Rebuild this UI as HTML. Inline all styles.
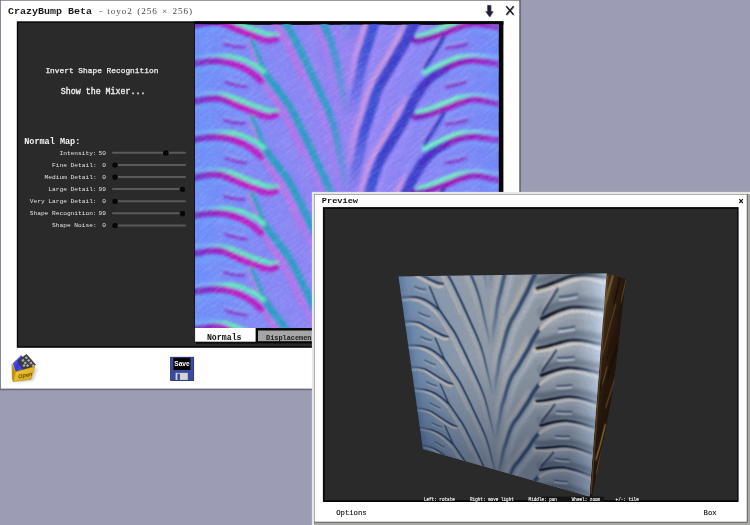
<!DOCTYPE html>
<html><head><meta charset="utf-8"><title>CrazyBump</title>
<style>
html,body{margin:0;padding:0;}
body{width:750px;height:525px;overflow:hidden;background:#9c9cb4;position:relative;font-family:"Liberation Mono",monospace;}
.L{position:absolute;left:0;top:0;will-change:transform;}
.clip{position:absolute;left:0;top:0;width:750px;height:496.6px;overflow:hidden;}
.cube{position:absolute;left:0;top:0;transform-origin:0 0;}
.cube svg{position:absolute;left:0;top:0;}
</style></head><body>
<svg class="L" width="750" height="525" viewBox="0 0 750 525" xml:space="preserve">
<rect x="0.00" y="0.00" width="521.00" height="390.30" fill="#6a6a80" />
<rect x="0.80" y="0.70" width="518.40" height="387.90" fill="#ffffff" />
<rect x="16.80" y="21.30" width="486.60" height="326.50" fill="#080808" />
<rect x="18.20" y="22.80" width="480.60" height="323.40" fill="#2a2a2a" />
<rect x="194.20" y="21.30" width="309.20" height="3.40" fill="#050505" />
<rect x="194.20" y="24.70" width="1.00" height="303.40" fill="#101010" />
<svg x="195" y="24.7" width="303.8" height="303.4" viewBox="0 0 304 303" preserveAspectRatio="none">
<defs>
<linearGradient id="nbg" x1="0" x2="1" y1="0" y2="0">
<stop offset="0" stop-color="#6a90fa"/><stop offset="0.2" stop-color="#8088f6"/>
<stop offset="0.5" stop-color="#9482f2"/><stop offset="0.8" stop-color="#8486f6"/><stop offset="1" stop-color="#7088f8"/>
</linearGradient>
<filter id="b1" x="-5%" y="-5%" width="110%" height="110%"><feGaussianBlur stdDeviation="1.6"/></filter>
<filter id="b2" x="-5%" y="-5%" width="110%" height="110%"><feGaussianBlur stdDeviation="2.2"/></filter>
<filter id="nz" x="0" y="0" width="100%" height="100%"><feTurbulence type="fractalNoise" baseFrequency="0.35" numOctaves="2" seed="3"/>
<feColorMatrix type="matrix" values="0 0 0 0 1  0 0 0 0 1  0 0 0 0 1  0.9 0 0 0 -0.32"/></filter>
<filter id="nz2" x="0" y="0" width="100%" height="100%"><feTurbulence type="fractalNoise" baseFrequency="0.06 0.4" numOctaves="2" seed="11"/>
<feColorMatrix type="matrix" values="0 0 0 0 0.85  0 0 0 0 0.9  0 0 0 0 1  1.6 0 0 0 -0.62"/></filter>
<filter id="nz3" x="0" y="0" width="100%" height="100%"><feTurbulence type="fractalNoise" baseFrequency="0.06 0.4" numOctaves="2" seed="23"/>
<feColorMatrix type="matrix" values="0 0 0 0 0.25  0 0 0 0 0.1  0 0 0 0 0.7  1.6 0 0 0 -0.62"/></filter>
<linearGradient id="gT" gradientUnits="userSpaceOnUse" x1="0" y1="47" x2="0" y2="250"><stop offset="0" stop-color="#289ec0" stop-opacity="1"/><stop offset="0.5" stop-color="#2a9cc4" stop-opacity="1"/><stop offset="0.72" stop-color="#3898cc" stop-opacity="0.8"/><stop offset="0.9" stop-color="#5090d8" stop-opacity="0.4"/><stop offset="1" stop-color="#6088e0" stop-opacity="0"/></linearGradient>
<linearGradient id="gTp" gradientUnits="userSpaceOnUse" x1="0" y1="47" x2="0" y2="250"><stop offset="0" stop-color="#e060e0" stop-opacity="0.0"/><stop offset="0.12" stop-color="#e060e0" stop-opacity="0.5"/><stop offset="0.6" stop-color="#d870e8" stop-opacity="0.45"/><stop offset="1" stop-color="#d070f0" stop-opacity="0"/></linearGradient>
<linearGradient id="gB" gradientUnits="userSpaceOnUse" x1="0" y1="60" x2="0" y2="245"><stop offset="0" stop-color="#3a34c6" stop-opacity="1"/><stop offset="0.25" stop-color="#3446cc" stop-opacity="1"/><stop offset="0.65" stop-color="#384cd2" stop-opacity="0.95"/><stop offset="0.88" stop-color="#4a5cdc" stop-opacity="0.55"/><stop offset="1" stop-color="#6070e8" stop-opacity="0"/></linearGradient>
<linearGradient id="gBp" gradientUnits="userSpaceOnUse" x1="0" y1="60" x2="0" y2="235"><stop offset="0" stop-color="#f0a0d8" stop-opacity="0.0"/><stop offset="0.15" stop-color="#f4a4d4" stop-opacity="0.85"/><stop offset="0.7" stop-color="#f0a0dc" stop-opacity="0.7"/><stop offset="1" stop-color="#e098e8" stop-opacity="0"/></linearGradient>
<linearGradient id="gBl" gradientUnits="userSpaceOnUse" x1="0" y1="60" x2="0" y2="235"><stop offset="0" stop-color="#a890ff" stop-opacity="0.0"/><stop offset="0.15" stop-color="#a890ff" stop-opacity="0.6"/><stop offset="0.7" stop-color="#a890ff" stop-opacity="0.5"/><stop offset="1" stop-color="#a890ff" stop-opacity="0"/></linearGradient>
<linearGradient id="gCL" gradientUnits="userSpaceOnUse" x1="0" y1="0" x2="85" y2="0"><stop offset="0" stop-color="#80b8ff" stop-opacity="0.35"/><stop offset="0.2" stop-color="#78d0f0" stop-opacity="0.7"/><stop offset="0.42" stop-color="#60f0b8" stop-opacity="1"/><stop offset="1" stop-color="#58ecbc" stop-opacity="1"/></linearGradient>
<linearGradient id="gML" gradientUnits="userSpaceOnUse" x1="0" y1="0" x2="85" y2="0"><stop offset="0" stop-color="#6c34c8" stop-opacity="1"/><stop offset="0.2" stop-color="#9020c0" stop-opacity="1"/><stop offset="0.5" stop-color="#c018c0" stop-opacity="1"/><stop offset="1" stop-color="#b020c8" stop-opacity="1"/></linearGradient>
<linearGradient id="gCR" gradientUnits="userSpaceOnUse" x1="304" y1="0" x2="215" y2="0"><stop offset="0" stop-color="#80b8ff" stop-opacity="0.5"/><stop offset="0.25" stop-color="#78dcec" stop-opacity="0.9"/><stop offset="0.5" stop-color="#70f8c0" stop-opacity="1"/><stop offset="1" stop-color="#68f4c8" stop-opacity="1"/></linearGradient>
<linearGradient id="gMR" gradientUnits="userSpaceOnUse" x1="304" y1="0" x2="215" y2="0"><stop offset="0" stop-color="#8840d0" stop-opacity="0.95"/><stop offset="0.2" stop-color="#9818c0" stop-opacity="1"/><stop offset="0.6" stop-color="#a010b8" stop-opacity="1"/><stop offset="1" stop-color="#7018b8" stop-opacity="1"/></linearGradient>
<linearGradient id="gMR2" gradientUnits="userSpaceOnUse" x1="304" y1="0" x2="215" y2="0"><stop offset="0" stop-color="#8840d0" stop-opacity="0.95"/><stop offset="0.2" stop-color="#9818c0" stop-opacity="1"/><stop offset="0.5" stop-color="#9014b8" stop-opacity="1"/><stop offset="0.7" stop-color="#5028c4" stop-opacity="1"/><stop offset="1" stop-color="#3a34c6" stop-opacity="1"/></linearGradient>
<g id="ps" fill="none" stroke-linecap="round" stroke-linejoin="round"><path d="M69.5 59.0C71.0 61.0 75.5 67.0 78.5 71.0C81.5 75.0 84.5 78.2 87.5 83.0C90.5 87.8 93.8 94.8 96.5 100.0C99.2 105.2 101.2 109.2 103.5 114.0C105.8 118.8 108.1 123.8 110.5 129.0C112.9 134.2 115.7 140.0 118.0 145.0C120.3 150.0 122.3 153.8 124.5 159.0C126.7 164.2 129.2 170.3 131.0 176.0C132.8 181.7 134.2 187.2 135.5 193.0C136.8 198.8 137.8 205.3 139.0 211.0C140.2 216.7 141.4 221.3 142.5 227.0C143.6 232.7 145.0 242.0 145.5 245.0" stroke="url(#gTp)" stroke-width="5" opacity="1.0" /><path d="M211.0 74.0C209.7 76.7 205.5 85.3 203.0 90.0C200.5 94.7 198.5 97.7 196.0 102.0C193.5 106.3 190.8 111.3 188.0 116.0C185.2 120.7 181.4 125.9 179.0 130.4C176.6 134.9 175.1 138.8 173.5 143.0C171.9 147.2 170.8 150.8 169.4 155.3C168.0 159.8 166.3 166.1 165.0 170.0C163.7 173.9 162.9 175.2 161.8 179.0C160.7 182.8 159.5 188.4 158.5 193.0C157.5 197.6 156.9 202.6 156.0 206.4C155.1 210.2 153.7 214.4 153.2 216.0" stroke="url(#gBp)" stroke-width="4.5" opacity="1.0" /><path d="M226.5 79.0C225.2 81.7 221.0 90.3 218.5 95.0C216.0 99.7 214.0 102.7 211.5 107.0C209.0 111.3 206.3 116.3 203.5 121.0C200.7 125.7 196.9 130.9 194.5 135.4C192.1 139.9 190.6 143.8 189.0 148.0C187.4 152.2 186.3 155.8 184.9 160.3C183.5 164.8 181.8 171.1 180.5 175.0C179.2 178.9 178.4 180.2 177.3 184.0C176.2 187.8 175.0 193.4 174.0 198.0C173.0 202.6 172.4 207.6 171.5 211.4C170.6 215.2 169.2 219.4 168.7 221.0" stroke="url(#gBl)" stroke-width="4" opacity="1.0" /><path d="M-4.0 7.0C-3.2 6.9 -2.0 7.0 1.0 6.5C4.0 6.0 9.8 4.4 14.0 4.0C18.2 3.6 21.3 3.0 26.4 4.3C31.5 5.6 39.1 9.6 44.7 11.9C50.3 14.2 57.5 17.0 60.0 18.0" stroke="#6ca8ff" stroke-width="4" opacity="0.7" /><path d="M-4.0 45.0C-3.2 44.9 -2.0 44.9 1.0 44.5C4.0 44.1 9.2 42.8 14.0 42.5C18.8 42.2 24.4 42.1 29.5 42.9C34.6 43.7 40.1 45.6 44.7 47.5C49.3 49.4 55.0 53.2 57.0 54.4" stroke="#6ca8ff" stroke-width="4" opacity="0.7" /><path d="M308.0 46.0C306.8 45.9 305.5 45.8 301.0 45.2C296.5 44.6 287.0 42.5 281.2 42.2C275.4 42.0 271.1 42.4 266.0 43.7C260.9 45.0 255.3 47.5 250.7 49.8C246.1 52.1 240.5 56.1 238.5 57.4" stroke="#78a8ff" stroke-width="4" opacity="0.55" /><path d="M308.0 9.7C306.8 9.6 305.5 9.7 301.0 8.9C296.5 8.1 286.8 5.1 281.0 5.0C275.2 4.9 271.1 6.6 266.0 8.1C260.9 9.6 255.8 12.3 250.7 14.2C245.6 16.1 238.0 18.6 235.5 19.5" stroke="#78a8ff" stroke-width="4" opacity="0.55" /></g>
<g id="pn" fill="none" stroke-linecap="round" stroke-linejoin="round"><path d="M69.0 47.0C70.2 48.5 73.3 52.5 76.0 56.0C78.7 59.5 82.0 64.0 85.0 68.0C88.0 72.0 91.0 75.2 94.0 80.0C97.0 84.8 100.3 91.8 103.0 97.0C105.7 102.2 107.7 106.2 110.0 111.0C112.3 115.8 114.6 120.8 117.0 126.0C119.4 131.2 122.2 137.0 124.5 142.0C126.8 147.0 128.8 150.8 131.0 156.0C133.2 161.2 135.7 167.3 137.5 173.0C139.3 178.7 140.7 184.2 142.0 190.0C143.3 195.8 144.3 202.3 145.5 208.0C146.7 213.7 147.9 218.3 149.0 224.0C150.1 229.7 151.5 239.0 152.0 242.0" stroke="url(#gT)" stroke-width="6.8" opacity="1.0" /><path d="M66.0 55.5C67.2 57.2 70.3 61.9 73.0 66.0C75.7 70.1 79.2 75.3 82.0 80.0C84.8 84.7 87.3 89.0 90.0 94.0C92.7 99.0 95.3 104.3 98.0 110.0C100.7 115.7 104.7 125.0 106.0 128.0" stroke="#e060d8" stroke-width="2.6" opacity="0.55" /><path d="M57.0 16.0C57.8 18.0 60.5 24.3 62.0 28.0C63.5 31.7 64.7 34.7 66.0 38.0C67.3 41.3 69.3 46.3 70.0 48.0" stroke="#2ca0c0" stroke-width="4.6" opacity="0.95" /><path d="M53.0 17.5C53.8 19.5 56.5 25.8 58.0 29.5C59.5 33.2 60.7 36.2 62.0 39.5C63.3 42.8 65.3 47.8 66.0 49.5" stroke="#e070d8" stroke-width="2.2" opacity="0.6" /><path d="M-4.0 -5.8C-3.2 -5.9 -2.0 -6.1 1.0 -6.3C4.0 -6.5 9.2 -7.1 14.0 -7.1C18.8 -7.1 24.4 -7.3 29.5 -6.3C34.6 -5.3 39.6 -2.9 44.7 -1.0C49.8 0.9 55.0 3.3 60.0 5.1C65.0 6.9 71.3 8.8 75.0 9.7C78.7 10.5 80.8 10.1 82.0 10.2" stroke="url(#gCL)" stroke-width="4.6" opacity="1.0" /><path d="M-4.0 0.8C-3.2 0.7 -2.0 0.8 1.0 0.3C4.0 -0.2 9.8 -1.8 14.0 -2.2C18.2 -2.6 21.3 -3.2 26.4 -1.9C31.5 -0.6 39.1 3.4 44.7 5.7C50.3 8.0 55.5 10.2 60.0 11.8C64.5 13.5 68.5 15.2 72.0 15.6C75.5 16.0 79.5 14.4 81.0 14.1" stroke="url(#gML)" stroke-width="6.6" opacity="1.0" /><path d="M-4.0 33.2C-3.2 33.1 -2.0 33.0 1.0 32.7C4.0 32.4 9.2 31.9 14.0 31.6C18.8 31.3 24.4 30.7 29.5 31.1C34.6 31.4 39.6 32.1 44.7 33.7C49.8 35.3 56.0 38.5 60.0 40.7C64.0 42.9 67.5 45.7 69.0 46.7" stroke="url(#gCL)" stroke-width="4.6" opacity="1.0" /><path d="M-4.0 38.8C-3.2 38.7 -2.0 38.7 1.0 38.3C4.0 37.9 9.2 36.6 14.0 36.3C18.8 36.0 24.4 35.9 29.5 36.7C34.6 37.5 40.1 39.4 44.7 41.3C49.3 43.2 53.5 45.8 57.0 48.2C60.5 50.6 64.5 54.5 66.0 55.8" stroke="url(#gML)" stroke-width="6.6" opacity="1.0" /><path d="M29.5 19.0C31.2 19.4 36.8 21.0 40.0 21.5C43.2 22.0 47.5 21.9 49.0 22.0" stroke="#8424c8" stroke-width="3.2" opacity="1" /><path d="M31.0 57.0C32.7 57.5 37.7 59.2 41.0 60.0C44.3 60.8 49.2 61.3 50.8 61.6" stroke="#8424c8" stroke-width="3.2" opacity="1" /><path d="M29.5 16.2C31.2 16.6 36.8 18.2 40.0 18.7C43.2 19.2 47.5 19.1 49.0 19.2" stroke="#90c0ff" stroke-width="1.8" opacity="0.7" /><path d="M31.0 54.2C32.7 54.7 37.7 56.4 41.0 57.2C44.3 58.0 49.2 58.5 50.8 58.8" stroke="#90c0ff" stroke-width="1.8" opacity="0.7" /><path d="M227.9 61.6C226.4 64.0 221.8 70.9 219.0 76.0C216.2 81.1 213.5 87.3 211.0 92.0C208.5 96.7 206.5 99.7 204.0 104.0C201.5 108.3 198.8 113.3 196.0 118.0C193.2 122.7 189.4 127.9 187.0 132.4C184.6 136.9 183.1 140.8 181.5 145.0C179.9 149.2 178.8 152.8 177.4 157.3C176.0 161.8 174.3 168.1 173.0 172.0C171.7 175.9 170.9 177.2 169.8 181.0C168.7 184.8 167.5 190.4 166.5 195.0C165.5 199.6 164.9 204.6 164.0 208.4C163.1 212.2 162.0 214.1 161.2 218.0C160.4 221.9 159.7 227.7 159.0 232.0C158.3 236.3 157.3 242.0 157.0 244.0" stroke="url(#gB)" stroke-width="9.5" opacity="1.0" /><path d="M250.7 43.3C248.7 44.6 242.3 47.8 238.5 50.9C234.7 54.0 231.2 57.4 227.9 61.6C224.7 65.8 221.8 70.9 219.0 76.0C216.2 81.1 213.5 87.3 211.0 92.0C208.5 96.7 206.5 99.7 204.0 104.0C201.5 108.3 198.8 113.3 196.0 118.0C193.2 122.7 188.5 130.0 187.0 132.4" stroke="#3a3cc8" stroke-width="9.5" opacity="0.9" /><path d="M308.0 32.5C306.8 32.4 305.5 32.2 301.0 32.0C296.5 31.8 286.8 31.0 281.0 31.0C275.2 31.0 271.1 30.9 266.0 31.9C260.9 32.9 255.8 35.1 250.7 37.2C245.6 39.4 239.1 43.0 235.5 44.8C231.9 46.6 230.1 47.5 229.0 48.0" stroke="url(#gCR)" stroke-width="4.6" opacity="1.0" /><path d="M308.0 39.5C306.8 39.4 305.5 39.3 301.0 38.7C296.5 38.1 287.0 36.0 281.2 35.7C275.4 35.5 271.1 35.9 266.0 37.2C260.9 38.5 255.3 41.0 250.7 43.3C246.1 45.6 242.3 47.8 238.5 50.9C234.7 54.0 229.7 59.8 227.9 61.6" stroke="url(#gMR2)" stroke-width="6.2" opacity="1.0" /><path d="M308.0 -2.8C306.8 -2.9 305.5 -3.1 301.0 -3.5C296.5 -3.9 286.8 -5.3 281.0 -5.3C275.2 -5.3 271.1 -4.9 266.0 -3.7C260.9 -2.5 255.8 -0.3 250.7 1.6C245.6 3.5 240.1 6.0 235.5 7.7C230.9 9.3 225.1 10.9 223.0 11.5" stroke="url(#gCR)" stroke-width="4.6" opacity="1.0" /><path d="M308.0 3.2C306.8 3.1 305.5 3.2 301.0 2.4C296.5 1.6 286.8 -1.4 281.0 -1.5C275.2 -1.6 271.1 0.1 266.0 1.6C260.9 3.1 255.8 5.8 250.7 7.7C245.6 9.6 240.3 11.6 235.5 13.0C230.7 14.4 224.8 15.6 222.0 16.0C219.2 16.4 219.5 15.6 219.0 15.5" stroke="url(#gMR)" stroke-width="6.0" opacity="1.0" /><path d="M249.0 11.5C248.0 13.2 245.2 18.4 243.0 22.0C240.8 25.6 238.2 29.4 236.0 33.0C233.8 36.5 231.0 41.6 230.0 43.3" stroke="#2234b8" stroke-width="3.6" opacity="1" /><path d="M245.5 10.5C244.5 12.2 241.7 17.4 239.5 21.0C237.3 24.6 234.7 28.4 232.5 32.0C230.3 35.5 227.5 40.6 226.5 42.3" stroke="#f0a0d0" stroke-width="1.6" opacity="0.3" /><path d="M252.0 23.0C253.7 22.8 258.7 22.2 262.0 21.5C265.3 20.8 270.3 19.4 272.0 19.0" stroke="#8020c0" stroke-width="3.2" opacity="1" /><path d="M252.0 61.6C253.7 61.2 258.9 60.3 262.0 59.5C265.1 58.7 269.1 57.4 270.5 57.0" stroke="#8020c0" stroke-width="3.2" opacity="1" /><path d="M252.0 20.2C253.7 19.9 258.7 19.4 262.0 18.7C265.3 18.0 270.3 16.6 272.0 16.2" stroke="#a0c8ff" stroke-width="1.8" opacity="0.6" /><path d="M252.0 58.8C253.7 58.5 258.9 57.5 262.0 56.7C265.1 55.9 269.1 54.6 270.5 54.2" stroke="#a0c8ff" stroke-width="1.8" opacity="0.6" /></g>
</defs>
<rect width="304" height="303" fill="url(#nbg)"/>
<g filter="url(#b2)"><use href="#ps" transform="translate(0 -304)"/><use href="#ps" transform="translate(0 -228)"/><use href="#ps" transform="translate(0 -152)"/><use href="#ps" transform="translate(0 -76)"/><use href="#ps" transform="translate(0 0)"/><use href="#ps" transform="translate(0 76)"/><use href="#ps" transform="translate(0 152)"/><use href="#ps" transform="translate(0 228)"/><use href="#ps" transform="translate(0 304)"/></g>
<g filter="url(#b1)"><use href="#pn" transform="translate(0 -304)"/><use href="#pn" transform="translate(0 -228)"/><use href="#pn" transform="translate(0 -152)"/><use href="#pn" transform="translate(0 -76)"/><use href="#pn" transform="translate(0 0)"/><use href="#pn" transform="translate(0 76)"/><use href="#pn" transform="translate(0 152)"/><use href="#pn" transform="translate(0 228)"/><use href="#pn" transform="translate(0 304)"/></g>
<rect width="304" height="303" filter="url(#nz)" opacity="0.15"/>
<g transform="rotate(-38 152 152)"><rect x="-80" y="-80" width="464" height="464" filter="url(#nz2)" opacity="0.15"/><rect x="-80" y="-78" width="464" height="464" filter="url(#nz3)" opacity="0.13"/></g>
</svg>
<rect x="255.60" y="328.10" width="243.20" height="15.30" fill="#050505" />
<rect x="196.00" y="340.50" width="60.60" height="3.10" fill="#050505" opacity="0.9"/>
<rect x="195.10" y="328.00" width="60.50" height="13.70" fill="#ffffff" />
<rect x="258.00" y="330.50" width="82.00" height="10.70" fill="#a6a6a6" />
<svg x="484" y="4" width="12" height="15" viewBox="0 0 12 15"><path d="M4.4 1.8h3.4v6h2.2L6.8 13.4 2.6 7.8h1.8z" fill="#9a9aa8" opacity="0.6"/><path d="M3.5 1.3h3.4v6.2h2.2L5.7 13 1.6 7.5h1.9z" fill="#1c1e2e" stroke="#34364a" stroke-width="0.4"/></svg>
<path d="M507.1 7L514.4 15.6M514.4 7L507.1 15.6" stroke="#b0b0b8" stroke-width="1.1" fill="none"/>
<path d="M506.3 6.2L513.6 14.8M513.6 6.2L506.3 14.8" stroke="#16161e" stroke-width="1.35" fill="none"/>
<rect x="112.00" y="151.80" width="74.00" height="2.00" fill="#5a5a5a" rx="1"/><circle cx="165.80" cy="152.45" r="2.9" fill="#3c3c3c"/><circle cx="165.80" cy="152.90" r="2.8" fill="#070707"/><text x="96.60" y="154.70" font-family="Liberation Mono" font-size="6.2" font-weight="normal" fill="#e2e2e2" text-anchor="end" >Intensity:</text><text x="105.90" y="154.70" font-family="Liberation Mono" font-size="6.2" font-weight="normal" fill="#e2e2e2" text-anchor="end" >50</text>
<rect x="112.00" y="163.90" width="74.00" height="2.00" fill="#5a5a5a" rx="1"/><circle cx="115.00" cy="164.55" r="2.9" fill="#3c3c3c"/><circle cx="115.00" cy="165.00" r="2.8" fill="#070707"/><text x="96.60" y="166.80" font-family="Liberation Mono" font-size="6.2" font-weight="normal" fill="#e2e2e2" text-anchor="end" >Fine Detail:</text><text x="105.90" y="166.80" font-family="Liberation Mono" font-size="6.2" font-weight="normal" fill="#e2e2e2" text-anchor="end" >0</text>
<rect x="112.00" y="176.00" width="74.00" height="2.00" fill="#5a5a5a" rx="1"/><circle cx="115.00" cy="176.65" r="2.9" fill="#3c3c3c"/><circle cx="115.00" cy="177.10" r="2.8" fill="#070707"/><text x="96.60" y="178.90" font-family="Liberation Mono" font-size="6.2" font-weight="normal" fill="#e2e2e2" text-anchor="end" >Medium Detail:</text><text x="105.90" y="178.90" font-family="Liberation Mono" font-size="6.2" font-weight="normal" fill="#e2e2e2" text-anchor="end" >0</text>
<rect x="112.00" y="188.10" width="74.00" height="2.00" fill="#5a5a5a" rx="1"/><circle cx="182.60" cy="188.75" r="2.9" fill="#3c3c3c"/><circle cx="182.60" cy="189.20" r="2.8" fill="#070707"/><text x="96.60" y="191.00" font-family="Liberation Mono" font-size="6.2" font-weight="normal" fill="#e2e2e2" text-anchor="end" >Large Detail:</text><text x="105.90" y="191.00" font-family="Liberation Mono" font-size="6.2" font-weight="normal" fill="#e2e2e2" text-anchor="end" >99</text>
<rect x="112.00" y="200.20" width="74.00" height="2.00" fill="#5a5a5a" rx="1"/><circle cx="115.00" cy="200.85" r="2.9" fill="#3c3c3c"/><circle cx="115.00" cy="201.30" r="2.8" fill="#070707"/><text x="96.60" y="203.10" font-family="Liberation Mono" font-size="6.2" font-weight="normal" fill="#e2e2e2" text-anchor="end" >Very Large Detail:</text><text x="105.90" y="203.10" font-family="Liberation Mono" font-size="6.2" font-weight="normal" fill="#e2e2e2" text-anchor="end" >0</text>
<rect x="112.00" y="212.30" width="74.00" height="2.00" fill="#5a5a5a" rx="1"/><circle cx="182.60" cy="212.95" r="2.9" fill="#3c3c3c"/><circle cx="182.60" cy="213.40" r="2.8" fill="#070707"/><text x="96.60" y="215.20" font-family="Liberation Mono" font-size="6.2" font-weight="normal" fill="#e2e2e2" text-anchor="end" >Shape Recognition:</text><text x="105.90" y="215.20" font-family="Liberation Mono" font-size="6.2" font-weight="normal" fill="#e2e2e2" text-anchor="end" >99</text>
<rect x="112.00" y="224.40" width="74.00" height="2.00" fill="#5a5a5a" rx="1"/><circle cx="115.00" cy="225.05" r="2.9" fill="#3c3c3c"/><circle cx="115.00" cy="225.50" r="2.8" fill="#070707"/><text x="96.60" y="227.30" font-family="Liberation Mono" font-size="6.2" font-weight="normal" fill="#e2e2e2" text-anchor="end" >Shape Noise:</text><text x="105.90" y="227.30" font-family="Liberation Mono" font-size="6.2" font-weight="normal" fill="#e2e2e2" text-anchor="end" >0</text>
<text x="8.00" y="13.80" font-family="Liberation Mono" font-size="10" font-weight="bold" fill="#1a1a1a" text-anchor="start" transform="translate(0 13.80) scale(1 0.970) translate(0 -13.80)" >CrazyBump Beta</text>
<text x="99.00" y="13.50" font-family="Liberation Serif" font-size="9.2" font-weight="normal" fill="#4a4a4a" text-anchor="start" letter-spacing="0.9" word-spacing="1.2">- toyo2 (256 &#215; 256)</text>
<text x="45.40" y="73.30" font-family="Liberation Mono" font-size="7.85" font-weight="normal" fill="#f0f0f0" text-anchor="start" stroke="#f0f0f0" stroke-width="0.25">Invert Shape Recognition</text>
<text x="60.80" y="93.90" font-family="Liberation Mono" font-size="8.3" font-weight="normal" fill="#f4f4f4" text-anchor="start" stroke="#f4f4f4" stroke-width="0.3">Show the Mixer...</text>
<text x="24.20" y="143.90" font-family="Liberation Mono" font-size="8.5" font-weight="bold" fill="#f4f4f4" text-anchor="start" >Normal Map:</text>
<text x="206.90" y="339.60" font-family="Liberation Mono" font-size="8.25" font-weight="bold" fill="#111" text-anchor="start" >Normals</text>
<text x="266.00" y="339.60" font-family="Liberation Mono" font-size="6.9" font-weight="bold" fill="#1c1c1c" text-anchor="start" >Displacement</text>
<svg x="6" y="350" width="40" height="38" viewBox="0 0 40 38">
<defs><linearGradient id="fg" x1="0" x2="1" y1="0" y2="1"><stop offset="0" stop-color="#f6d040"/><stop offset="1" stop-color="#d4a010"/></linearGradient>
<linearGradient id="fb" x1="0" x2="1" y1="0" y2="1"><stop offset="0" stop-color="#7878ff"/><stop offset="0.5" stop-color="#3434d8"/><stop offset="1" stop-color="#6060f0"/></linearGradient>
<filter id="fs"><feGaussianBlur stdDeviation="0.9"/></filter></defs>
<path d="M9 31.5L26 29.5 30.5 17 28 17z" fill="#999" opacity="0.45" filter="url(#fs)" transform="translate(1.2 1.2)"/>
<path d="M6.9 13.4L15.2 5.4 18.6 9.2 17.6 19.5 10 22z" fill="url(#fb)" stroke="#2a2a98" stroke-width="0.4"/>
<path d="M11.9 10.8L20.6 4.3 29.7 14.8 22 21 17 20z" fill="#3c3c3c" stroke="#222" stroke-width="0.4"/>
<path d="M15.3 10.2l1.9-1.4 1.5 1.7-1.9 1.4zM18.6 7.6l1.9-1.4 1.5 1.7-1.9 1.4zM17.6 12.8l1.9-1.4 1.5 1.7-1.9 1.4zM20.9 10.3l1.9-1.4 1.5 1.7-1.9 1.4zM19.9 15.4l1.9-1.4 1.5 1.7-1.9 1.4zM23.2 12.9l1.9-1.4 1.5 1.7-1.9 1.4zM25.5 15.5l1.9-1.4 1.5 1.7-1.9 1.4zM16.3 15.4l1.9-1.4 1.5 1.7-1.9 1.4z" fill="#c8c8c8" opacity="0.8"/>
<path d="M5.8 13.7L9.8 21.7 7.2 31.8 6.1 28.9z" fill="#c49010" stroke="#a87c08" stroke-width="0.3"/>
<path d="M9.8 21.7L28.9 16.5 25 29.3 7.2 31.8z" fill="url(#fg)" stroke="#b08408" stroke-width="0.5"/>
<text x="12.6" y="28.4" font-family="Liberation Sans" font-style="italic" font-weight="bold" font-size="5.6" fill="#6e4c00" transform="rotate(-11 12.6 28.4)">Open</text>
</svg>
<svg x="170" y="356.5" width="26" height="26" viewBox="0 0 26 26">
<rect x="1.2" y="1.2" width="23" height="23.4" fill="#777" opacity="0.5"/><rect x="0.6" y="0.6" width="23" height="23.4" fill="#3c4a9c" stroke="#28306c" stroke-width="0.8"/>
<rect x="3.4" y="1.3" width="17" height="12.2" fill="#050505"/>
<rect x="5.6" y="16.4" width="12.2" height="7" fill="#d4d4d4"/>
<rect x="7.4" y="17.2" width="2.6" height="6.2" fill="#3c4a9c"/>
<text x="12" y="9.4" text-anchor="middle" font-family="Liberation Sans" font-weight="bold" font-size="6.6" fill="#fff">Save</text>
</svg>
<rect x="311.90" y="191.90" width="438.10" height="333.10" fill="#e6e6e2" />
<rect x="747.40" y="194.00" width="2.60" height="331.00" fill="#a8a8a4" />
<rect x="314.00" y="522.40" width="436.00" height="2.60" fill="#a8a8a4" />
<rect x="314.00" y="194.00" width="433.60" height="328.60" fill="#404040" />
<rect x="314.00" y="194.00" width="432.70" height="327.70" fill="#8c8c8c" />
<rect x="314.70" y="194.70" width="432.00" height="327.00" fill="#ffffff" />
<rect x="322.90" y="207.10" width="415.70" height="294.80" fill="#080808" />
<rect x="324.70" y="208.90" width="412.50" height="291.50" fill="#2a2a2a" />
<text x="321.80" y="202.90" font-family="Liberation Mono" font-size="8.65" font-weight="bold" fill="#111" text-anchor="start" transform="translate(0 202.90) scale(1 0.860) translate(0 -202.90)" >Preview</text>
<path d="M739.3 199.2L742.8 203M742.8 199.2L739.3 203" stroke="#111" stroke-width="1.15" fill="none"/>
<defs><clipPath id="sfc"><polygon points="606.2,273.6 626.0,278.8 621.2,322.0 614.6,380.0 606.8,425.0 598.4,465.0 592.3,496.6 589.2,496.6"/></clipPath>
<linearGradient id="sfg" gradientUnits="userSpaceOnUse" x1="600" y1="300" x2="622" y2="304"><stop offset="0" stop-color="#50381c"/><stop offset="0.35" stop-color="#3a2814"/><stop offset="1" stop-color="#22150a"/></linearGradient>
<filter id="sfb" x="-20%" y="-5%" width="140%" height="110%"><feGaussianBlur stdDeviation="0.45 1.2"/></filter></defs>
<g clip-path="url(#sfc)">
<polygon points="606.2,273.6 626.0,278.8 621.2,322.0 614.6,380.0 606.8,425.0 598.4,465.0 592.3,496.6 589.2,496.6" fill="url(#sfg)"/>
<g filter="url(#sfb)" fill="none" stroke-linecap="round">
<path d="M622.4 361.3Q615.0 387.4 607.6 413.5" stroke="#251608" stroke-width="1.1" opacity="0.88"/>
<path d="M624.6 366.8Q620.3 379.2 617.4 391.7" stroke="#1a1006" stroke-width="1.9" opacity="0.84"/>
<path d="M639.3 264.8Q632.5 291.7 625.2 318.5" stroke="#6a4e2a" stroke-width="1.7" opacity="0.89"/>
<path d="M601.4 269.8Q595.2 295.1 587.9 320.4" stroke="#4c361c" stroke-width="1.4" opacity="0.89"/>
<path d="M625.6 377.0Q620.8 395.2 616.1 413.5" stroke="#100804" stroke-width="1.4" opacity="0.79"/>
<path d="M603.3 473.9Q599.9 487.6 596.5 501.3" stroke="#140c04" stroke-width="0.9" opacity="0.87"/>
<path d="M633.9 349.1Q630.9 365.2 626.6 381.4" stroke="#140c04" stroke-width="1.1" opacity="0.92"/>
<path d="M615.0 267.3Q608.7 289.4 602.2 311.5" stroke="#7c5e36" stroke-width="1.9" opacity="0.69"/>
<path d="M613.3 275.5Q605.9 302.3 599.9 329.1" stroke="#7c5e36" stroke-width="1.8" opacity="0.60"/>
<path d="M619.5 364.3Q612.6 385.9 605.7 407.5" stroke="#6a4e2a" stroke-width="1.4" opacity="0.73"/>
<path d="M639.6 347.8Q638.4 356.8 635.3 365.8" stroke="#251608" stroke-width="1.2" opacity="0.91"/>
<path d="M615.8 304.5Q608.4 329.3 602.7 354.1" stroke="#6a4e2a" stroke-width="1.1" opacity="0.69"/>
<path d="M613.2 436.6Q607.5 451.1 603.6 465.5" stroke="#251608" stroke-width="1.7" opacity="0.61"/>
<path d="M624.9 341.6Q622.5 353.0 618.8 364.3" stroke="#6a4e2a" stroke-width="2.0" opacity="0.66"/>
<path d="M636.3 291.2Q628.2 315.4 621.4 339.5" stroke="#1a1006" stroke-width="1.1" opacity="0.93"/>
<path d="M624.1 462.3Q617.7 479.1 613.1 495.9" stroke="#100804" stroke-width="1.1" opacity="0.85"/>
<path d="M632.9 315.4Q626.2 335.4 620.7 355.5" stroke="#1e1208" stroke-width="1.0" opacity="0.77"/>
<path d="M624.6 408.6Q622.2 418.9 618.1 429.3" stroke="#140c04" stroke-width="0.9" opacity="0.74"/>
<path d="M601.9 313.5Q598.9 327.7 594.0 342.0" stroke="#1e1208" stroke-width="1.3" opacity="0.91"/>
<path d="M626.3 485.4Q619.7 507.2 614.5 529.0" stroke="#140c04" stroke-width="2.1" opacity="0.77"/>
<path d="M612.5 339.0Q609.0 348.6 607.3 358.2" stroke="#1e1208" stroke-width="1.8" opacity="0.71"/>
<path d="M603.0 489.8Q599.0 509.0 593.4 528.1" stroke="#6a4e2a" stroke-width="1.9" opacity="0.92"/>
<path d="M627.4 337.7Q621.2 363.3 615.3 389.0" stroke="#140c04" stroke-width="2.0" opacity="0.80"/>
<path d="M615.3 401.9Q609.2 421.6 604.7 441.4" stroke="#1e1208" stroke-width="2.2" opacity="0.91"/>
<path d="M615.5 426.1Q609.3 448.7 603.3 471.3" stroke="#1a1006" stroke-width="0.9" opacity="0.86"/>
<path d="M624.1 262.0Q618.9 279.9 612.9 297.8" stroke="#2c1c0c" stroke-width="1.9" opacity="0.83"/>
<path d="M635.9 369.3Q631.0 385.1 625.7 400.9" stroke="#1a1006" stroke-width="1.0" opacity="0.92"/>
<path d="M617.7 410.1Q610.3 435.6 602.3 461.1" stroke="#7c5e36" stroke-width="1.7" opacity="0.88"/>
<path d="M608.0 432.3Q604.8 445.3 599.9 458.3" stroke="#7c5e36" stroke-width="1.0" opacity="0.77"/>
<path d="M633.9 451.7Q628.5 473.9 623.9 496.0" stroke="#6a4e2a" stroke-width="1.0" opacity="0.76"/>
<path d="M633.2 472.5Q629.1 488.6 624.3 504.7" stroke="#251608" stroke-width="1.4" opacity="0.63"/>
<path d="M634.9 262.4Q632.6 272.2 629.9 281.9" stroke="#100804" stroke-width="1.7" opacity="0.80"/>
<path d="M616.2 405.6Q612.6 418.1 610.0 430.7" stroke="#6a4e2a" stroke-width="1.9" opacity="0.94"/>
<path d="M604.4 282.1Q599.1 301.0 594.4 319.9" stroke="#1e1208" stroke-width="1.8" opacity="0.67"/>
<path d="M607.1 366.7Q605.0 375.9 601.9 385.1" stroke="#6a4e2a" stroke-width="1.1" opacity="0.87"/>
<path d="M637.9 381.8Q633.2 400.1 629.8 418.3" stroke="#7c5e36" stroke-width="0.9" opacity="0.93"/>
<path d="M605.2 424.8Q601.4 442.1 596.0 459.5" stroke="#8c6c40" stroke-width="1.6" opacity="0.83"/>
<path d="M632.8 373.1Q629.1 388.5 623.5 403.8" stroke="#1e1208" stroke-width="1.8" opacity="0.89"/>
<path d="M628.7 405.8Q626.7 418.7 622.7 431.7" stroke="#100804" stroke-width="1.6" opacity="0.88"/>
<path d="M636.4 330.3Q628.2 355.1 621.6 380.0" stroke="#2c1c0c" stroke-width="1.3" opacity="0.75"/>
<path d="M636.8 319.7Q633.6 332.7 630.6 345.8" stroke="#140c04" stroke-width="1.0" opacity="0.72"/>
<path d="M605.6 440.2Q602.8 451.9 599.1 463.7" stroke="#2c1c0c" stroke-width="2.1" opacity="0.77"/>
<path d="M603.4 478.1Q599.4 491.1 596.2 504.2" stroke="#1a1006" stroke-width="1.7" opacity="0.78"/>
<path d="M622.4 453.3Q618.7 468.0 613.7 482.8" stroke="#251608" stroke-width="1.1" opacity="0.90"/>
<path d="M621.0 482.6Q614.8 502.2 608.6 521.8" stroke="#1a1006" stroke-width="0.8" opacity="0.73"/>
<path d="M601.8 381.5Q595.6 407.5 587.5 433.4" stroke="#1e1208" stroke-width="1.5" opacity="0.84"/>
<path d="M621.5 270.5Q618.6 287.1 614.0 303.8" stroke="#100804" stroke-width="1.1" opacity="0.77"/>
<path d="M636.0 334.8Q630.0 361.1 624.0 387.4" stroke="#1e1208" stroke-width="1.1" opacity="0.82"/>
<path d="M605.2 472.4Q596.7 495.9 589.4 519.3" stroke="#7c5e36" stroke-width="0.8" opacity="0.70"/>
<path d="M609.8 425.0Q604.8 443.3 599.6 461.5" stroke="#1a1006" stroke-width="1.7" opacity="0.85"/>
<path d="M635.1 419.8Q633.3 429.3 630.2 438.7" stroke="#251608" stroke-width="1.0" opacity="0.67"/>
<path d="M625.5 403.4Q621.3 422.2 616.6 441.0" stroke="#6a4e2a" stroke-width="1.1" opacity="0.86"/>
<path d="M636.1 445.5Q632.5 460.3 627.1 475.2" stroke="#7c5e36" stroke-width="1.9" opacity="0.67"/>
<path d="M635.6 277.8Q631.6 289.2 628.0 300.7" stroke="#8c6c40" stroke-width="2.0" opacity="0.75"/>
<path d="M605.0 440.6Q599.8 457.1 596.6 473.5" stroke="#7c5e36" stroke-width="1.6" opacity="0.73"/>
<path d="M614.5 447.9Q608.3 470.0 602.8 492.0" stroke="#7c5e36" stroke-width="1.9" opacity="0.77"/>
<path d="M630.5 260.7Q625.7 281.1 621.1 301.4" stroke="#7c5e36" stroke-width="1.1" opacity="0.67"/>
<path d="M639.6 452.5Q630.1 478.6 622.4 504.7" stroke="#2c1c0c" stroke-width="0.9" opacity="0.63"/>
<path d="M617.1 346.9Q611.9 362.4 607.3 378.0" stroke="#140c04" stroke-width="2.0" opacity="0.66"/>
<path d="M629.6 361.7Q623.7 378.2 619.1 394.7" stroke="#1a1006" stroke-width="1.9" opacity="0.71"/>
</g>
<path d="M607.5 276L591 494" stroke="#7a5c34" stroke-width="1.4" opacity="0.5" fill="none"/>
</g>
</svg>
<div class="clip">
<div class="cube" style="width:304px;height:304px;transform:matrix3d(0.13886526,-0.25533065,0.00000000,-0.00089956,0.38995811,0.89614457,0.00000000,0.00073136,0.00000000,0.00000000,1.00000000,0.00000000,398.50000000,276.40000000,0.00000000,1.00000000)"><svg width="304" height="304" viewBox="0 0 304 304">
<defs>
<linearGradient id="cbg" x1="0" x2="1" y1="0" y2="0">
<stop offset="0" stop-color="#55749c"/><stop offset="0.05" stop-color="#6e89aa"/><stop offset="0.16" stop-color="#8396ae"/>
<stop offset="0.4" stop-color="#929dab"/><stop offset="0.7" stop-color="#8f98a3"/><stop offset="0.9" stop-color="#929ba6"/><stop offset="0.965" stop-color="#aebccd"/><stop offset="1" stop-color="#c6d6ec"/>
</linearGradient>
<linearGradient id="cbg2" x1="0" x2="0.2" y1="0" y2="1">
<stop offset="0" stop-color="#ffffff" stop-opacity="0.05"/><stop offset="0.45" stop-color="#203050" stop-opacity="0.0"/><stop offset="1" stop-color="#0c1c38" stop-opacity="0.36"/>
</linearGradient>
<filter id="c1" x="-5%" y="-5%" width="110%" height="110%"><feGaussianBlur stdDeviation="1.0"/></filter>
<filter id="c2" x="-5%" y="-5%" width="110%" height="110%"><feGaussianBlur stdDeviation="2.6"/></filter>
<filter id="cz" x="0" y="0" width="100%" height="100%"><feTurbulence type="fractalNoise" baseFrequency="0.3" numOctaves="2" seed="5"/>
<feColorMatrix type="matrix" values="0 0 0 0 0.1  0 0 0 0 0.15  0 0 0 0 0.3  0.9 0 0 0 -0.3"/></filter>
<linearGradient id="hT" gradientUnits="userSpaceOnUse" x1="0" y1="47" x2="0" y2="250"><stop offset="0" stop-color="#13284a" stop-opacity="1"/><stop offset="0.5" stop-color="#182e50" stop-opacity="1"/><stop offset="0.75" stop-color="#243a5c" stop-opacity="0.7"/><stop offset="0.9" stop-color="#34486a" stop-opacity="0.35"/><stop offset="1" stop-color="#34486a" stop-opacity="0"/></linearGradient>
<linearGradient id="hTp" gradientUnits="userSpaceOnUse" x1="0" y1="47" x2="0" y2="250"><stop offset="0" stop-color="#c8beb4" stop-opacity="0.0"/><stop offset="0.12" stop-color="#c8beb4" stop-opacity="0.75"/><stop offset="0.6" stop-color="#c4bcb4" stop-opacity="0.6"/><stop offset="1" stop-color="#c0bab4" stop-opacity="0"/></linearGradient>
<linearGradient id="hB" gradientUnits="userSpaceOnUse" x1="0" y1="60" x2="0" y2="245"><stop offset="0" stop-color="#283c5e" stop-opacity="1"/><stop offset="0.3" stop-color="#30466a" stop-opacity="1"/><stop offset="0.6" stop-color="#3a5072" stop-opacity="0.9"/><stop offset="0.85" stop-color="#4a5e7c" stop-opacity="0.5"/><stop offset="1" stop-color="#4a5e7c" stop-opacity="0"/></linearGradient>
<linearGradient id="hBp" gradientUnits="userSpaceOnUse" x1="0" y1="60" x2="0" y2="235"><stop offset="0" stop-color="#c8bcb0" stop-opacity="0.0"/><stop offset="0.15" stop-color="#c8bcb0" stop-opacity="0.9"/><stop offset="0.7" stop-color="#c4bab0" stop-opacity="0.7"/><stop offset="1" stop-color="#c0b8b0" stop-opacity="0"/></linearGradient>
<linearGradient id="hBl" gradientUnits="userSpaceOnUse" x1="0" y1="60" x2="0" y2="235"><stop offset="0" stop-color="#c4ccd6" stop-opacity="0.0"/><stop offset="0.15" stop-color="#c4ccd6" stop-opacity="0.75"/><stop offset="0.7" stop-color="#c0c8d2" stop-opacity="0.5"/><stop offset="1" stop-color="#c0c8d2" stop-opacity="0"/></linearGradient>
<linearGradient id="hCL" gradientUnits="userSpaceOnUse" x1="0" y1="0" x2="85" y2="0"><stop offset="0" stop-color="#2c4468" stop-opacity="0.45"/><stop offset="0.3" stop-color="#12264a" stop-opacity="0.95"/><stop offset="1" stop-color="#0e2042" stop-opacity="1"/></linearGradient>
<linearGradient id="hML" gradientUnits="userSpaceOnUse" x1="0" y1="0" x2="85" y2="0"><stop offset="0" stop-color="#a8b0bc" stop-opacity="0.5"/><stop offset="0.35" stop-color="#c8c0b6" stop-opacity="0.9"/><stop offset="1" stop-color="#ccc2b6" stop-opacity="0.95"/></linearGradient>
<linearGradient id="hCR" gradientUnits="userSpaceOnUse" x1="304" y1="0" x2="215" y2="0"><stop offset="0" stop-color="#44546e" stop-opacity="0.45"/><stop offset="0.3" stop-color="#16243e" stop-opacity="0.95"/><stop offset="0.7" stop-color="#08101e" stop-opacity="1"/><stop offset="1" stop-color="#08101e" stop-opacity="1"/></linearGradient>
<linearGradient id="hMR" gradientUnits="userSpaceOnUse" x1="304" y1="0" x2="215" y2="0"><stop offset="0" stop-color="#dce6f2" stop-opacity="0.8"/><stop offset="0.3" stop-color="#d4d2d0" stop-opacity="0.95"/><stop offset="1" stop-color="#c8c0b6" stop-opacity="0.95"/></linearGradient>
<linearGradient id="hSR" gradientUnits="userSpaceOnUse" x1="304" y1="0" x2="215" y2="0"><stop offset="0" stop-color="#667282" stop-opacity="0.4"/><stop offset="0.4" stop-color="#5e6a7a" stop-opacity="0.85"/><stop offset="1" stop-color="#5a6676" stop-opacity="0.9"/></linearGradient>
<g id="qs" fill="none" stroke-linecap="round" stroke-linejoin="round"><path d="M70.0 59.0C71.5 61.0 76.0 67.0 79.0 71.0C82.0 75.0 85.0 78.2 88.0 83.0C91.0 87.8 94.3 94.8 97.0 100.0C99.7 105.2 101.7 109.2 104.0 114.0C106.3 118.8 108.6 123.8 111.0 129.0C113.4 134.2 116.2 140.0 118.5 145.0C120.8 150.0 122.8 153.8 125.0 159.0C127.2 164.2 129.7 170.3 131.5 176.0C133.3 181.7 134.7 187.2 136.0 193.0C137.3 198.8 138.3 205.3 139.5 211.0C140.7 216.7 141.9 221.3 143.0 227.0C144.1 232.7 145.5 242.0 146.0 245.0" stroke="url(#hTp)" stroke-width="4" opacity="1.0" /><path d="M211.0 74.0C209.7 76.7 205.5 85.3 203.0 90.0C200.5 94.7 198.5 97.7 196.0 102.0C193.5 106.3 190.8 111.3 188.0 116.0C185.2 120.7 181.4 125.9 179.0 130.4C176.6 134.9 175.1 138.8 173.5 143.0C171.9 147.2 170.8 150.8 169.4 155.3C168.0 159.8 166.3 166.1 165.0 170.0C163.7 173.9 162.9 175.2 161.8 179.0C160.7 182.8 159.5 188.4 158.5 193.0C157.5 197.6 156.9 202.6 156.0 206.4C155.1 210.2 153.7 214.4 153.2 216.0" stroke="url(#hBp)" stroke-width="4" opacity="1.0" /><path d="M227.0 79.0C225.7 81.7 221.5 90.3 219.0 95.0C216.5 99.7 214.5 102.7 212.0 107.0C209.5 111.3 206.8 116.3 204.0 121.0C201.2 125.7 197.4 130.9 195.0 135.4C192.6 139.9 191.1 143.8 189.5 148.0C187.9 152.2 186.8 155.8 185.4 160.3C184.0 164.8 182.3 171.1 181.0 175.0C179.7 178.9 178.9 180.2 177.8 184.0C176.7 187.8 175.5 193.4 174.5 198.0C173.5 202.6 172.9 207.6 172.0 211.4C171.1 215.2 169.7 219.4 169.2 221.0" stroke="url(#hBl)" stroke-width="5" opacity="1.0" /><path d="M308.0 25.5C306.8 25.4 305.5 25.2 301.0 25.0C296.5 24.8 286.8 24.0 281.0 24.0C275.2 24.0 271.1 23.9 266.0 24.9C260.9 25.9 255.8 28.1 250.7 30.2C245.6 32.4 239.1 36.0 235.5 37.8C231.9 39.6 230.1 40.5 229.0 41.0" stroke="url(#hSR)" stroke-width="9" opacity="1.0" /><path d="M308.0 -9.8C306.8 -9.9 305.5 -10.1 301.0 -10.5C296.5 -10.9 286.8 -12.3 281.0 -12.3C275.2 -12.3 271.1 -11.8 266.0 -10.7C260.9 -9.5 255.8 -7.3 250.7 -5.4C245.6 -3.5 240.1 -0.9 235.5 0.7C230.9 2.4 225.1 3.9 223.0 4.5" stroke="url(#hSR)" stroke-width="9" opacity="1.0" /><path d="M308.0 45.5C306.8 45.4 305.5 45.3 301.0 44.7C296.5 44.1 287.0 42.0 281.2 41.7C275.4 41.5 271.1 41.9 266.0 43.2C260.9 44.5 255.3 47.0 250.7 49.3C246.1 51.6 240.5 55.6 238.5 56.9" stroke="#c8d0da" stroke-width="4" opacity="0.4" /><path d="M308.0 9.2C306.8 9.1 305.5 9.2 301.0 8.4C296.5 7.6 286.8 4.6 281.0 4.5C275.2 4.4 271.1 6.1 266.0 7.6C260.9 9.1 255.8 11.8 250.7 13.7C245.6 15.6 240.3 17.6 235.5 19.0C230.7 20.4 224.2 21.5 222.0 22.0" stroke="#c8d0da" stroke-width="4" opacity="0.4" /><path d="M-4.0 -11.5C-3.2 -11.6 -2.0 -11.8 1.0 -12.0C4.0 -12.2 9.2 -12.8 14.0 -12.8C18.8 -12.8 24.4 -13.0 29.5 -12.0C34.6 -11.0 39.6 -8.6 44.7 -6.7C49.8 -4.8 55.0 -2.4 60.0 -0.6C65.0 1.2 72.5 3.2 75.0 4.0" stroke="#70849e" stroke-width="6" opacity="0.5" /><path d="M-4.0 27.5C-3.2 27.4 -2.0 27.3 1.0 27.0C4.0 26.7 9.2 26.2 14.0 25.9C18.8 25.6 24.4 25.0 29.5 25.4C34.6 25.8 39.6 26.4 44.7 28.0C49.8 29.6 56.0 32.8 60.0 35.0C64.0 37.2 67.5 40.0 69.0 41.0" stroke="#70849e" stroke-width="6" opacity="0.5" /></g>
<g id="qn" fill="none" stroke-linecap="round" stroke-linejoin="round"><path d="M69.5 47.0C70.7 48.5 73.8 52.5 76.5 56.0C79.2 59.5 82.5 64.0 85.5 68.0C88.5 72.0 91.5 75.2 94.5 80.0C97.5 84.8 100.8 91.8 103.5 97.0C106.2 102.2 108.2 106.2 110.5 111.0C112.8 115.8 115.1 120.8 117.5 126.0C119.9 131.2 122.7 137.0 125.0 142.0C127.3 147.0 129.3 150.8 131.5 156.0C133.7 161.2 136.2 167.3 138.0 173.0C139.8 178.7 141.2 184.2 142.5 190.0C143.8 195.8 144.8 202.3 146.0 208.0C147.2 213.7 148.4 218.3 149.5 224.0C150.6 229.7 152.0 239.0 152.5 242.0" stroke="url(#hT)" stroke-width="3.0" opacity="1.0" /><path d="M66.0 55.5C67.2 57.2 70.3 61.9 73.0 66.0C75.7 70.1 79.2 75.3 82.0 80.0C84.8 84.7 87.3 89.0 90.0 94.0C92.7 99.0 95.3 104.3 98.0 110.0C100.7 115.7 104.7 125.0 106.0 128.0" stroke="#c8beb4" stroke-width="2.2" opacity="0.6" /><path d="M57.0 16.0C57.8 18.0 60.5 24.3 62.0 28.0C63.5 31.7 64.7 34.7 66.0 38.0C67.3 41.3 69.3 46.3 70.0 48.0" stroke="#162c4e" stroke-width="2.6" opacity="0.95" /><path d="M-4.0 1.0C-3.2 0.9 -2.0 1.0 1.0 0.5C4.0 0.0 9.8 -1.6 14.0 -2.0C18.2 -2.4 21.3 -3.0 26.4 -1.7C31.5 -0.4 39.1 3.6 44.7 5.9C50.3 8.2 55.5 10.3 60.0 12.0C64.5 13.7 68.5 15.4 72.0 15.8C75.5 16.2 79.5 14.6 81.0 14.3" stroke="url(#hML)" stroke-width="3.6" opacity="1.0" /><path d="M-4.0 -4.5C-3.2 -4.6 -2.0 -4.8 1.0 -5.0C4.0 -5.2 9.2 -5.8 14.0 -5.8C18.8 -5.8 24.4 -6.0 29.5 -5.0C34.6 -4.0 39.6 -1.6 44.7 0.3C49.8 2.2 55.0 4.6 60.0 6.4C65.0 8.2 71.3 10.2 75.0 11.0C78.7 11.8 80.8 11.4 82.0 11.5" stroke="url(#hCL)" stroke-width="3.0" opacity="1.0" /><path d="M-4.0 39.0C-3.2 38.9 -2.0 38.9 1.0 38.5C4.0 38.1 9.2 36.8 14.0 36.5C18.8 36.2 24.4 36.1 29.5 36.9C34.6 37.7 40.1 39.6 44.7 41.5C49.3 43.4 53.5 46.0 57.0 48.4C60.5 50.8 64.5 54.7 66.0 56.0" stroke="url(#hML)" stroke-width="3.6" opacity="1.0" /><path d="M-4.0 34.5C-3.2 34.4 -2.0 34.3 1.0 34.0C4.0 33.7 9.2 33.2 14.0 32.9C18.8 32.6 24.4 32.0 29.5 32.4C34.6 32.8 39.6 33.4 44.7 35.0C49.8 36.6 56.0 39.8 60.0 42.0C64.0 44.2 67.5 47.0 69.0 48.0" stroke="url(#hCL)" stroke-width="3.0" opacity="1.0" /><path d="M29.5 17.5C31.2 17.9 36.8 19.5 40.0 20.0C43.2 20.5 47.5 20.4 49.0 20.5" stroke="#2a4266" stroke-width="2.6" opacity="0.9" /><path d="M31.0 55.5C32.7 56.0 37.7 57.7 41.0 58.5C44.3 59.3 49.2 59.8 50.8 60.1" stroke="#2a4266" stroke-width="2.6" opacity="0.9" /><path d="M29.5 20.5C31.2 20.9 36.8 22.5 40.0 23.0C43.2 23.5 47.5 23.4 49.0 23.5" stroke="#b8c0cc" stroke-width="1.8" opacity="0.7" /><path d="M31.0 58.5C32.7 59.0 37.7 60.7 41.0 61.5C44.3 62.3 49.2 62.8 50.8 63.1" stroke="#b8c0cc" stroke-width="1.8" opacity="0.7" /><path d="M226.9 61.6C225.4 64.0 220.8 70.9 218.0 76.0C215.2 81.1 212.5 87.3 210.0 92.0C207.5 96.7 205.5 99.7 203.0 104.0C200.5 108.3 197.8 113.3 195.0 118.0C192.2 122.7 188.4 127.9 186.0 132.4C183.6 136.9 182.1 140.8 180.5 145.0C178.9 149.2 177.8 152.8 176.4 157.3C175.0 161.8 173.3 168.1 172.0 172.0C170.7 175.9 169.9 177.2 168.8 181.0C167.7 184.8 166.5 190.4 165.5 195.0C164.5 199.6 163.9 204.6 163.0 208.4C162.1 212.2 161.0 214.1 160.2 218.0C159.4 221.9 158.7 227.7 158.0 232.0C157.3 236.3 156.3 242.0 156.0 244.0" stroke="url(#hB)" stroke-width="5.0" opacity="1.0" /><path d="M308.0 40.0C306.8 39.9 305.5 39.8 301.0 39.2C296.5 38.6 287.0 36.5 281.2 36.2C275.4 36.0 271.1 36.4 266.0 37.7C260.9 39.0 255.3 41.5 250.7 43.8C246.1 46.1 242.3 48.3 238.5 51.4C234.7 54.5 229.7 60.3 227.9 62.1" stroke="url(#hMR)" stroke-width="4.6" opacity="1.0" /><path d="M308.0 33.5C306.8 33.4 305.5 33.2 301.0 33.0C296.5 32.8 286.8 32.0 281.0 32.0C275.2 32.0 271.1 31.9 266.0 32.9C260.9 33.9 255.8 36.1 250.7 38.2C245.6 40.4 239.1 44.0 235.5 45.8C231.9 47.6 230.1 48.5 229.0 49.0" stroke="url(#hCR)" stroke-width="4.2" opacity="1.0" /><path d="M308.0 3.7C306.8 3.6 305.5 3.7 301.0 2.9C296.5 2.1 286.8 -0.9 281.0 -1.0C275.2 -1.1 271.1 0.6 266.0 2.1C260.9 3.6 255.8 6.3 250.7 8.2C245.6 10.1 240.3 12.1 235.5 13.5C230.7 14.9 224.8 16.1 222.0 16.5C219.2 16.9 219.5 16.1 219.0 16.0" stroke="url(#hMR)" stroke-width="4.6" opacity="1.0" /><path d="M308.0 -1.8C306.8 -1.9 305.5 -2.1 301.0 -2.5C296.5 -2.9 286.8 -4.3 281.0 -4.3C275.2 -4.3 271.1 -3.9 266.0 -2.7C260.9 -1.6 255.8 0.7 250.7 2.6C245.6 4.5 240.1 7.0 235.5 8.7C230.9 10.3 225.1 11.9 223.0 12.5" stroke="url(#hCR)" stroke-width="4.2" opacity="1.0" /><path d="M249.0 11.5C248.0 13.2 245.2 18.4 243.0 22.0C240.8 25.6 238.2 29.4 236.0 33.0C233.8 36.5 231.0 41.6 230.0 43.3" stroke="#1c3052" stroke-width="2.6" opacity="0.95" /><path d="M246.0 10.5C245.0 12.2 242.2 17.4 240.0 21.0C237.8 24.6 235.2 28.4 233.0 32.0C230.8 35.5 228.0 40.6 227.0 42.3" stroke="#c8c0b8" stroke-width="1.8" opacity="0.6" /><path d="M252.0 21.8C253.7 21.6 258.7 21.0 262.0 20.3C265.3 19.6 270.3 18.2 272.0 17.8" stroke="#3c4e6c" stroke-width="3.2" opacity="0.85" /><path d="M252.0 60.4C253.7 60.0 258.9 59.1 262.0 58.3C265.1 57.5 269.1 56.2 270.5 55.8" stroke="#3c4e6c" stroke-width="3.2" opacity="0.85" /><path d="M252.0 25.0C253.7 24.8 258.7 24.2 262.0 23.5C265.3 22.8 270.3 21.4 272.0 21.0" stroke="#dde5ee" stroke-width="2.6" opacity="0.7" /><path d="M252.0 63.6C253.7 63.2 258.9 62.3 262.0 61.5C265.1 60.7 269.1 59.4 270.5 59.0" stroke="#dde5ee" stroke-width="2.6" opacity="0.7" /></g>
</defs>
<rect width="304" height="304" fill="url(#cbg)"/>
<g filter="url(#c2)"><g transform="matrix(1 0.03 0 1 0 -3)"><use href="#qs" transform="translate(0 -304)"/><use href="#qs" transform="translate(0 -228)"/><use href="#qs" transform="translate(0 -152)"/><use href="#qs" transform="translate(0 -76)"/><use href="#qs" transform="translate(0 0)"/><use href="#qs" transform="translate(0 76)"/><use href="#qs" transform="translate(0 152)"/><use href="#qs" transform="translate(0 228)"/><use href="#qs" transform="translate(0 304)"/></g></g>
<g filter="url(#c1)"><g transform="matrix(1 0.03 0 1 0 -3)"><use href="#qn" transform="translate(0 -304)"/><use href="#qn" transform="translate(0 -228)"/><use href="#qn" transform="translate(0 -152)"/><use href="#qn" transform="translate(0 -76)"/><use href="#qn" transform="translate(0 0)"/><use href="#qn" transform="translate(0 76)"/><use href="#qn" transform="translate(0 152)"/><use href="#qn" transform="translate(0 228)"/><use href="#qn" transform="translate(0 304)"/></g></g>
<rect width="304" height="304" fill="url(#cbg2)"/>
<rect width="304" height="304" filter="url(#cz)" opacity="0.24"/>
</svg></div>
</div>
<svg class="L" width="750" height="525" viewBox="0 0 750 525" xml:space="preserve">
<rect x="324.10" y="500.50" width="413.40" height="1.40" fill="#050505" />
<rect x="540.00" y="496.60" width="64.00" height="5.00" fill="#141414" />
<text x="423.90" y="500.90" font-family="Liberation Mono" font-size="4.3" font-weight="normal" fill="#f4f4f4" text-anchor="start" transform="translate(0 500.90) scale(1 1.250) translate(0 -500.90)" stroke="#f4f4f4" stroke-width="0.12">Left: rotate</text>
<text x="470.00" y="500.90" font-family="Liberation Mono" font-size="4.3" font-weight="normal" fill="#f4f4f4" text-anchor="start" transform="translate(0 500.90) scale(1 1.250) translate(0 -500.90)" stroke="#f4f4f4" stroke-width="0.12">Right: move light</text>
<text x="528.60" y="500.90" font-family="Liberation Mono" font-size="4.3" font-weight="normal" fill="#f4f4f4" text-anchor="start" transform="translate(0 500.90) scale(1 1.250) translate(0 -500.90)" stroke="#f4f4f4" stroke-width="0.12">Middle: pan</text>
<text x="571.80" y="500.90" font-family="Liberation Mono" font-size="4.3" font-weight="normal" fill="#f4f4f4" text-anchor="start" transform="translate(0 500.90) scale(1 1.250) translate(0 -500.90)" stroke="#f4f4f4" stroke-width="0.12">Wheel: zoom</text>
<text x="615.60" y="500.90" font-family="Liberation Mono" font-size="4.3" font-weight="normal" fill="#f4f4f4" text-anchor="start" transform="translate(0 500.90) scale(1 1.250) translate(0 -500.90)" stroke="#f4f4f4" stroke-width="0.12">+/-: tile</text>
<text x="336.20" y="514.70" font-family="Liberation Mono" font-size="7.25" font-weight="normal" fill="#111" text-anchor="start" stroke="#111" stroke-width="0.15">Options</text>
<text x="703.60" y="514.70" font-family="Liberation Mono" font-size="7.25" font-weight="normal" fill="#111" text-anchor="start" stroke="#111" stroke-width="0.15">Box</text>
</svg>
</body></html>
